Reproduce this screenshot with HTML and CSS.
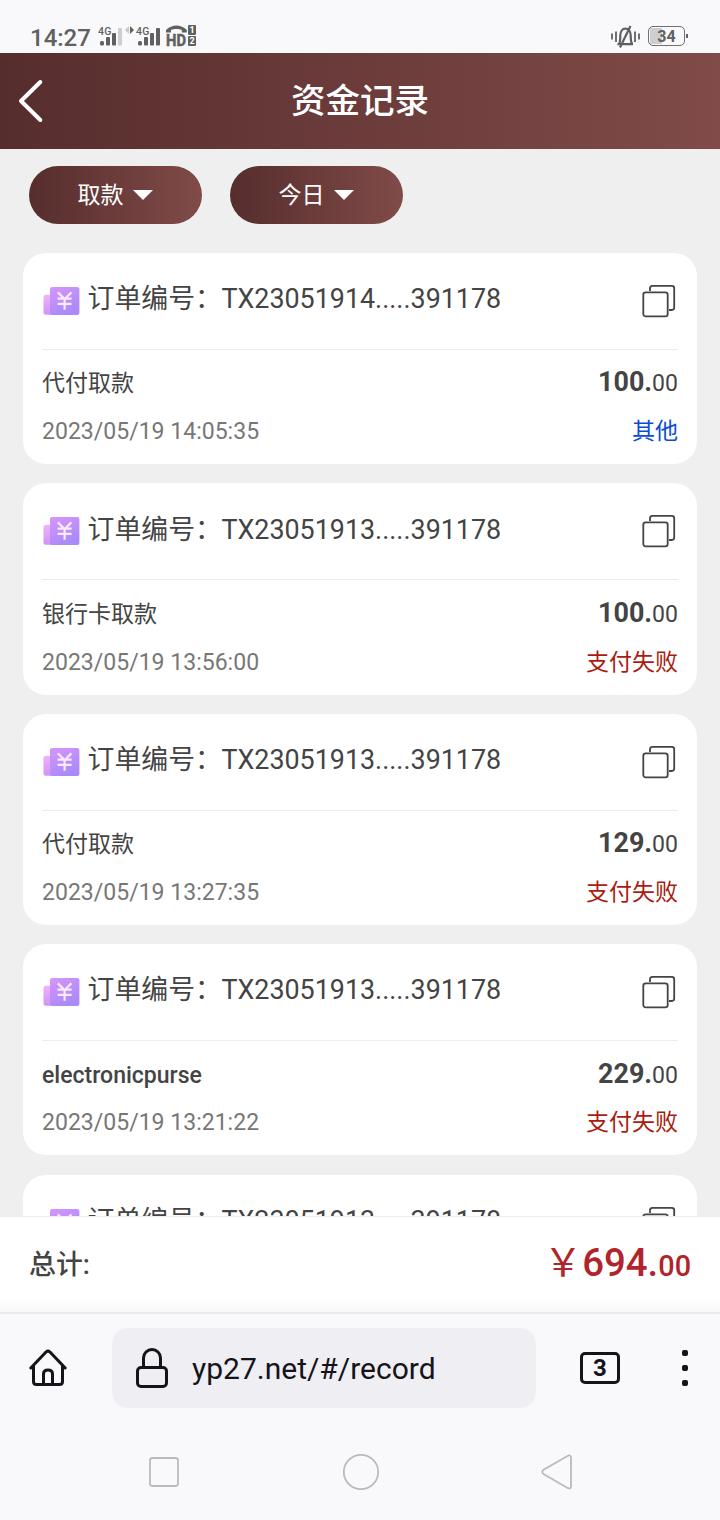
FILE: index.html
```html
<!DOCTYPE html>
<html lang="zh-CN">
<head>
<meta charset="utf-8">
<title>资金记录</title>
<link rel="stylesheet" href="styles.css">
</head>
<body>
<svg class="defs" width="0" height="0" aria-hidden="true">
  <defs>
    <linearGradient id="front" x1="0" y1="0" x2="0.5" y2="1"><stop offset="0" stop-color="#d596fb"/><stop offset="1" stop-color="#a98af8"/></linearGradient>
    <linearGradient id="back" x1="0" y1="0" x2="0" y2="1"><stop offset="0" stop-color="#f0b1fc"/><stop offset="1" stop-color="#cf94f6"/></linearGradient>
    <symbol id="yen" viewBox="0 0 38 32">
      <rect x="1.500" y="9.800" width="14" height="20" rx="2.500" fill="url(#back)"/>
      <rect x="8" y="2" width="29.400" height="28" rx="2" fill="url(#front)"/>
      <path d="M15.800 7.400l6.800 6.600 6.800-6.600M22.600 14v10.800M15.600 13.700h14M15.600 18.800h14" fill="none" stroke="#fbe9ff" stroke-width="2.200"/>
    </symbol>
    <symbol id="copy" viewBox="0 0 34 34">
      <path d="M8 7V4.200a2.400 2.400 0 0 1 2.400-2.400h19.400a2.400 2.400 0 0 1 2.400 2.400v19.400a2.400 2.400 0 0 1-2.400 2.400H27" fill="none" stroke="#444" stroke-width="1.800"/>
      <rect x="1.300" y="8.300" width="24.400" height="24" rx="2.400" fill="none" stroke="#444" stroke-width="1.800"/>
    </symbol>
  </defs>
</svg>
<div class="screen">
  <div class="status">
    <span class="clock">14:27</span>
    <svg class="signals" width="100" height="24" viewBox="0 0 100 24">
      <g fill="#606060">
        <text class="net" x="0" y="9.500" textLength="13.500">4G</text>
        <rect x="2" y="16" width="4" height="4.500" rx="1.500"/><rect x="8" y="12" width="4" height="8.500" rx="1"/><rect x="14" y="8" width="4" height="12.500" rx="1"/>
        <rect x="20" y="3" width="4" height="17.500" rx="1" fill="#cdcdce"/>
        <path d="M31 1v8l-4.200-4z" fill="#c9c9ca"/><path d="M32 1v8l4-4z"/>
        <text class="net" x="38" y="9.500" textLength="13.500">4G</text>
        <rect x="40" y="16" width="4" height="4.500" rx="1.500"/><rect x="46" y="12" width="4" height="8.500" rx="1"/><rect x="52" y="8" width="4" height="12.500" rx="1"/><rect x="58" y="3" width="4" height="17.500" rx="1"/>
        <path d="M68 7.500V5C74-1 83-1 88.800 5v2.500h-5V5c-3-1.300-7.800-1.300-10.800 0v2.500z"/>
        <text class="hd" x="68" y="20.800" textLength="20" lengthAdjust="spacingAndGlyphs">HD</text>
        <rect x="90" y="0" width="8" height="10" rx="1"/><rect x="90" y="11" width="8" height="10" rx="1"/>
        <text class="sim" x="91.500" y="8.200">1</text><text class="sim" x="91.500" y="19.200">2</text>
      </g>
    </svg>
    <svg class="mute" width="30" height="24" viewBox="0 0 30 24" fill="none" stroke="#606060" stroke-width="2.200">
      <path d="M2 8.500v6M6 6.500v10.500M25 6.500v10.500M29 8.500v6" stroke-width="1.800"/>
      <path d="M7.500 19.200h15.500M9.300 18.500c1-2 1-4 1-8 0-4 2-6.800 5.200-6.800s5.200 2.800 5.200 6.800c0 4 0 6 1.200 8M20.500 1L10 22.500"/>
    </svg>
    <span class="battery"><span class="level">34</span></span>
  </div>

  <header class="header">
    <svg class="back" width="28" height="44" viewBox="0 0 28 44"><path d="M24.300 3L5 22l19.300 19" fill="none" stroke="#fff" stroke-width="4" stroke-linecap="round" stroke-linejoin="round"/></svg>
    <h1 class="title">资金记录</h1>
  </header>

  <main class="content">
    <div class="filters">
      <button class="filter"><span>取款</span><i class="caret"></i></button>
      <button class="filter"><span>今日</span><i class="caret"></i></button>
    </div>
    <div class="list">
      <article class="card">
        <div class="order"><svg class="yen"><use href="#yen"/></svg><span class="label">订单编号：</span><span class="number">TX23051914.....391178</span><svg class="copy"><use href="#copy"/></svg></div>
        <div class="row first"><span class="type">代付取款</span><span class="amount"><b>100.</b>00</span></div>
        <div class="row"><span class="date">2023/05/19 14:05:35</span><span class="other">其他</span></div>
      </article>
      <article class="card">
        <div class="order"><svg class="yen"><use href="#yen"/></svg><span class="label">订单编号：</span><span class="number">TX23051913.....391178</span><svg class="copy"><use href="#copy"/></svg></div>
        <div class="row first"><span class="type">银行卡取款</span><span class="amount"><b>100.</b>00</span></div>
        <div class="row"><span class="date">2023/05/19 13:56:00</span><span class="failed">支付失败</span></div>
      </article>
      <article class="card">
        <div class="order"><svg class="yen"><use href="#yen"/></svg><span class="label">订单编号：</span><span class="number">TX23051913.....391178</span><svg class="copy"><use href="#copy"/></svg></div>
        <div class="row first"><span class="type">代付取款</span><span class="amount"><b>129.</b>00</span></div>
        <div class="row"><span class="date">2023/05/19 13:27:35</span><span class="failed">支付失败</span></div>
      </article>
      <article class="card">
        <div class="order"><svg class="yen"><use href="#yen"/></svg><span class="label">订单编号：</span><span class="number">TX23051913.....391178</span><svg class="copy"><use href="#copy"/></svg></div>
        <div class="row first"><span class="type latin">electronicpurse</span><span class="amount"><b>229.</b>00</span></div>
        <div class="row"><span class="date">2023/05/19 13:21:22</span><span class="failed">支付失败</span></div>
      </article>
      <article class="card">
        <div class="order"><svg class="yen"><use href="#yen"/></svg><span class="label">订单编号：</span><span class="number">TX23051913.....391178</span><svg class="copy"><use href="#copy"/></svg></div>
      </article>
    </div>
  </main>

  <div class="total"><span class="total-label">总计:</span><span class="sum"><span class="sign">￥</span><span class="whole">694.</span>00</span></div>

  <div class="browser">
    <svg class="home" width="40" height="40" viewBox="0 0 40 40" fill="none" stroke="#15141a" stroke-width="3" stroke-linecap="round" stroke-linejoin="round"><path d="M2.800 20L18 4q2-1.800 4 0l15.200 16M5.500 18.500V33.500q0 3 3 3h23q3 0 3-3V18.500M15.500 36V26q0-4 4.500-4t4.500 4V36"/></svg>
    <div class="address">
      <svg width="34" height="42" viewBox="0 0 34 42" fill="none" stroke="#15141a" stroke-width="3"><rect x="2.500" y="20.500" width="29" height="19" rx="3.500"/><path d="M8.500 20V11a8.500 8.500 0 0 1 17 0v9"/></svg>
      <span class="url">yp27.net/#/record</span>
    </div>
    <span class="tabs">3</span>
    <span class="menu"><i></i><i></i><i></i></span>
  </div>

  <div class="nav">
    <svg width="36" height="40" viewBox="0 0 36 40"><rect x="4" y="6" width="28" height="28" rx="2.500"/></svg>
    <svg width="40" height="40" viewBox="0 0 40 40"><circle cx="20" cy="20" r="17.200"/></svg>
    <svg width="36" height="40" viewBox="0 0 36 40"><path d="M29 3.700L4.500 17.800q-2.500 2.200 0 4.200L29 36.200q3 1 3-2V5.700q0-3-3-2z"/></svg>
  </div>
</div>
</body>
</html>
```
FILE: styles.css
```css
* { box-sizing: border-box; }
body {
  margin: 0;
  background: #f9f9fb;
  font-family: Roboto, "Noto Sans CJK SC", sans-serif;
  color: #444;
}
.defs { position: absolute; }
.screen { width: 720px; height: 1520px; display: flex; flex-direction: column; overflow: hidden; }
svg { display: block; flex: none; }

.status { height: 53px; flex: none; display: flex; align-items: flex-start; padding: 25px 32px 0 30px; }
.clock { width: 68px; font-size: 24px; line-height: 26px; font-weight: 500; color: #606060; }
.net { font-size: 10.500px; font-weight: 500; }
.hd { font-size: 17px; font-weight: 700; stroke: #606060; stroke-width: 0.500px; }
.sim { font-size: 9px; font-weight: 700; fill: #fff; }
.mute { margin-left: auto; margin-right: 8px; }
.battery { display: flex; align-items: center; margin-top: 1px; }
.battery::after { content: ""; width: 2px; height: 4px; background: #606060; margin-left: 1px; }
.level {
  width: 37px; height: 20px; border: 1.500px solid #707070; border-radius: 5px;
  background: linear-gradient(#cecece, #cecece) 1px 1px / 12px 16px no-repeat;
  font-size: 16px; line-height: 20px; font-weight: 700; text-align: center; color: #606060;
}

.header {
  height: 96px; flex: none; display: grid; grid-template-columns: 28px 1fr 28px; align-items: center;
  padding: 0 16px; background: linear-gradient(90deg, #562d2d, #804b48);
}
.title { margin: 0; text-align: center; font-size: 34.560px; line-height: 50px; font-weight: 500; color: #fff; }

.content { flex: 1; min-height: 0; overflow: hidden; background: #efefef; padding: 17px 23px 0; }
.filters { display: flex; gap: 28px; padding-left: 6px; }
.filter {
  width: 173px; height: 58px; border: 0; border-radius: 29px; padding: 0 1px 0 0;
  display: flex; align-items: center; justify-content: center; gap: 9px;
  background: linear-gradient(90deg, #562d2d, #804b48);
  font: 400 23.040px/34px Roboto, "Noto Sans CJK SC", sans-serif; color: #fff;
}
.filter span { padding-top: 1px; }
.caret { border: 10px solid transparent; border-top: 10px solid #fff; border-bottom: 0; }
.list { display: flex; flex-direction: column; gap: 19.200px; margin-top: 29px; }
.card { height: 211.200px; flex: none; background: #fff; border-radius: 23px; padding: 0 19px; }
.order { height: 97px; display: flex; align-items: center; border-bottom: 1px solid #ededed; font-size: 26.880px; line-height: 40px; }
.order .yen { width: 38px; height: 32px; margin-right: 7.500px; }
.label { margin-top: -3.500px; }
.number { margin-top: -3.500px; margin-left: -0.500px; }
.copy { width: 34px; height: 34px; margin-left: auto; margin-right: 2px; }
.row { height: 48px; display: flex; align-items: baseline; justify-content: space-between; font-size: 23.040px; line-height: 48px; }
.row.first { height: 49.800px; margin-top: 8.400px; }
.latin { font-weight: 500; }
.amount b { font-size: 26.880px; }
.date { color: #777; }
.other { color: #0b4bd8; }
.failed { color: #aa1c10; }

.total {
  height: 96px; flex: none; display: flex; align-items: center; justify-content: space-between;
  padding: 0 29px; border-top: 1px solid #ececec;
  background: linear-gradient(#fff 86%, #f8f8f8);
}
.total-label { font-size: 26.880px; font-weight: 500; margin-top: -5px; }
.sum { font-size: 28.800px; line-height: 48px; font-weight: 500; color: #b1242b; }
.sign { font-weight: 400; font-size: 38.400px; }
.whole { font-size: 38.400px; }

.browser { height: 112px; flex: none; display: flex; align-items: center; padding: 0 30px 2px 28px; border-top: 2px solid #ebebed; }
.address { width: 424px; height: 80px; margin-left: 44px; border-radius: 16px; background: #efeef3; display: flex; align-items: center; padding-left: 23px; gap: 23px; }
.url { font-size: 30px; line-height: 40px; padding-top: 1px; color: #15141a; }
.tabs { width: 40px; height: 32px; margin-left: 44px; border: 3px solid #15141a; border-radius: 5px; text-align: center; font-size: 24px; line-height: 26px; font-weight: 700; color: #15141a; }
.menu { display: flex; flex-direction: column; gap: 9px; margin-left: auto; margin-right: 2px; }
.menu i { width: 6px; height: 6px; border-radius: 2px; background: #15141a; }
.nav { flex: none; height: 96px; display: flex; justify-content: space-between; align-items: center; padding: 0 146px; }
.nav svg { fill: none; stroke: #bbb; stroke-width: 1.800; }
.nav svg:last-child { margin-right: -1px; margin-left: -1px; }
```
